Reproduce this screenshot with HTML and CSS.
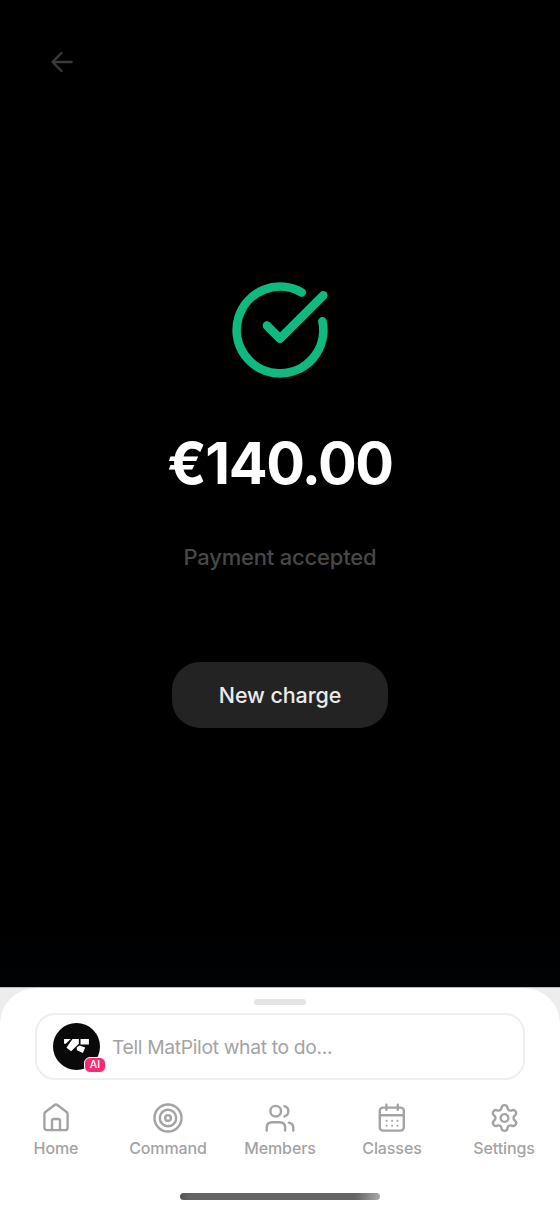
FILE: index.html
```html
<!DOCTYPE html>
<html lang="en">
<head>
<meta charset="utf-8">
<meta name="viewport" content="width=device-width, initial-scale=1">
<title>Payment accepted</title>
<link rel="stylesheet" href="styles.css">
</head>
<body>
<div class="app">
  <main class="screen">
    <header class="topbar">
      <svg class="back" viewBox="0 0 24 24"><path d="M21.5 12H3M11.5 3 2.5 12l9 9"/></svg>
    </header>
    <section class="result">
      <svg class="check" viewBox="0 0 24 24"><path d="M21.801 10A10 10 0 1 1 17 3.335"/><path d="m9 11 3 3L22 4"/></svg>
      <h1 class="amount">€140.00</h1>
      <p class="status">Payment accepted</p>
      <button class="new-charge">New charge</button>
    </section>
  </main>
  <div class="dock">
    <div class="sheet">
      <div class="grabber"></div>
      <div class="prompt">
        <div class="avatar">
          <svg class="logo" viewBox="0 0 140 140"><path d="M33 48H53L38 62H33zM58 48H77V62L54 84 40 74zM82 48H107V64H82zM71 72 79 67 96 73 89 89 71 81z"/></svg>
          <span class="ai">AI</span>
        </div>
        <span class="placeholder">Tell MatPilot what to do...</span>
      </div>
      <nav class="tabs">
        <a class="tab"><svg class="icon" viewBox="0 0 32 32"><path d="M4.4 12.3c0-1.1.4-1.8 1.3-2.5l8.6-6.6c1.3-1 2.1-1 3.4 0l8.6 6.6c.9.7 1.3 1.4 1.3 2.5v13.1c0 1.8-.9 2.7-2.7 2.7H7.1c-1.8 0-2.7-.9-2.7-2.7z"/><path d="M12 28V18.7c0-1.1.6-1.7 1.7-1.7h4.6c1.1 0 1.7.6 1.7 1.7V28"/></svg><span>Home</span></a>
        <a class="tab"><svg class="icon" viewBox="0 0 32 32"><circle cx="16" cy="16" r="13.5"/><circle cx="16" cy="16" r="8.2"/><circle cx="16" cy="16" r="2.9"/></svg><span>Command</span></a>
        <a class="tab"><svg class="icon" viewBox="0 0 32 32"><circle cx="11.7" cy="9.2" r="5.3"/><path d="M2.7 28.5v-2.8c0-3.4 2-5.4 5.4-5.4h7.6c3.4 0 5.4 2 5.4 5.4v2.8M20.5 4.2a5.3 5.3 0 0 1 0 10.2M25 20.6c2.8.7 4.3 2.5 4.3 5.1v2.8"/></svg><span>Members</span></a>
        <a class="tab"><svg class="icon" viewBox="0 0 32 32"><rect x="3.8" y="5.6" width="24" height="23" rx="3"/><path d="M4 13.2h24M10.4 2.7v5M21.8 2.7v5"/><path class="dots" d="M10.6 18.8h.01M16.1 18.8h.01M21.5 18.8h.01M10.6 23.8h.01M16.1 23.8h.01M21.5 23.8h.01"/></svg><span>Classes</span></a>
        <a class="tab"><svg class="icon gear" viewBox="0 0 24 24"><path d="M9.671 4.136a2.34 2.34 0 0 1 4.659 0 2.34 2.34 0 0 0 3.319 1.915 2.34 2.34 0 0 1 2.33 4.033 2.34 2.34 0 0 0 0 3.831 2.34 2.34 0 0 1-2.33 4.033 2.34 2.34 0 0 0-3.319 1.915 2.34 2.34 0 0 1-4.659 0 2.34 2.34 0 0 0-3.32-1.915 2.34 2.34 0 0 1-2.33-4.033 2.34 2.34 0 0 0 0-3.831A2.34 2.34 0 0 1 6.35 6.051a2.34 2.34 0 0 0 3.319-1.915"/><circle cx="12" cy="12" r="3"/></svg><span>Settings</span></a>
      </nav>
      <div class="home-bar"></div>
    </div>
  </div>
</div>
</body>
</html>
```
FILE: styles.css
```css
* { box-sizing: border-box; }
body { margin: 0; background: #000; font-family: Inter, "Liberation Sans", sans-serif; }
svg { display: block; fill: none; stroke: currentColor; stroke-linecap: round; stroke-linejoin: round; }
.app { display: flex; flex-direction: column; width: 560px; height: 1212px; overflow: hidden; }
.screen { height: 987px; background: linear-gradient(#000 92%, #010204); }
.topbar { height: 278px; padding: 50px 0 0 50px; }
.back { width: 24px; height: 24px; color: #3b3b3b; stroke-width: 2.4; }
.result { display: flex; flex-direction: column; align-items: center; }
.check { width: 104px; height: 104px; color: #10b981; stroke-width: 2; }
.amount { margin: 46px 0 0; font-size: 57.5px; line-height: 70px; font-weight: 650; letter-spacing: -1.4px; color: #fff; }
.status { margin: 45px 0 0; font-size: 22px; line-height: 28px; font-weight: 450; letter-spacing: -.2px; color: #484848; }
.new-charge { width: 216px; height: 66px; margin-top: 91px; border: 0; border-radius: 28px; background: #232323; color: #ebebeb; font: 500 21.5px Inter, sans-serif; letter-spacing: -.1px; }
.dock { height: 225px; background: #ededed; border-top: 1px solid #bdbdbd; }
.sheet { display: flex; flex-direction: column; align-items: center; height: 224px; padding-top: 11px; border-radius: 36px 36px 0 0; background: #fff; }
.grabber { width: 52px; height: 6px; border-radius: 3px; background: #e4e4e7; }
.prompt { display: flex; align-items: center; width: 490px; height: 67px; margin-top: 8px; padding-left: 16px; border: 2px solid #efefef; border-radius: 20px; }
.avatar { position: relative; width: 47px; height: 47px; border-radius: 50%; background: #090909; }
.logo { width: 47px; height: 47px; fill: #fff; stroke: none; }
.ai { position: absolute; left: 31px; top: 34px; width: 22px; height: 16px; border: 1px solid #fff; border-radius: 6px; background: #f62b72; color: #fff; font-size: 10.5px; line-height: 14px; font-weight: 500; text-align: center; }
.placeholder { margin-left: 12px; font-size: 19.3px; line-height: 24px; letter-spacing: -.34px; color: #a3a3a3; }
.tabs { display: grid; grid-template-columns: repeat(5, 112px); margin-top: 22px; }
.tab { display: flex; flex-direction: column; align-items: center; gap: 4px; font-size: 16px; line-height: 20px; font-weight: 500; letter-spacing: -.1px; color: #a3a3a3; }
.icon { width: 32px; height: 32px; stroke-width: 2.4; }
.gear { width: 31px; height: 32px; stroke-width: 1.85; }
.dots { stroke-width: 2.1; }
.home-bar { width: 200px; height: 7px; margin-top: 35px; border-radius: 4px; background: linear-gradient(90deg, #555, #656565 5% 88%, #aaa); }
```
